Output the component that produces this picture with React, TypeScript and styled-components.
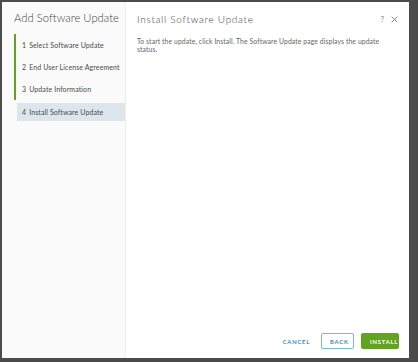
import styled, { createGlobalStyle } from 'styled-components'

const GlobalStyle = createGlobalStyle`
  html, body {
    margin: 0;
    padding: 0;
    background: #4b4b4b;
  }
  body {
    font-family: Lato, "Liberation Sans", sans-serif;
  }
`

type Step = {
  id: number
  title: string
}

const steps: Step[] = [
  { id: 1, title: 'Select Software Update' },
  { id: 2, title: 'End User License Agreement' },
  { id: 3, title: 'Update Information' },
  { id: 4, title: 'Install Software Update' },
]

const App = () => {
  const current = 4

  return (
    <>
      <GlobalStyle />
      <Screen>
        <Dialog>
          <Sidebar>
            <SideTitle>Add Software Update</SideTitle>
            <StepList>
              {steps.map((s) => (
                <StepItem key={s.id} $done={s.id < current} $active={s.id === current}>
                  <span>{s.id}</span>
                  {s.title}
                </StepItem>
              ))}
            </StepList>
          </Sidebar>

          <Content>
            <Header>
              <Title>Install Software Update</Title>
              <HeaderIcons>
                <IconButton>?</IconButton>
                <IconButton>
                  <svg width="7" height="7" viewBox="0 0 10 10">
                    <path d="M1 1 L9 9 M9 1 L1 9" stroke="#777" strokeWidth="1.3" />
                  </svg>
                </IconButton>
              </HeaderIcons>
            </Header>

            <Body>
              To start the update, click Install. The Software Update page displays the update status.
            </Body>

            <Footer>
              <FlatButton>CANCEL</FlatButton>
              <OutlineButton>BACK</OutlineButton>
              <PrimaryButton>INSTALL</PrimaryButton>
            </Footer>
          </Content>
        </Dialog>
      </Screen>
    </>
  )
}

const Screen = styled.div`
  width: 418px;
  height: 362px;
  padding: 2px 9px 4px 2px;
  box-sizing: border-box;
`

const Dialog = styled.div`
  display: flex;
  height: 100%;
  background: #fff;
`

const Sidebar = styled.div`
  width: 124px;
  flex-shrink: 0;
  background: #fafafa;
  border-right: 1px solid #eeeeee;
  padding: 8px 0 0 12px;
  box-sizing: border-box;
`

const SideTitle = styled.h2`
  margin: 0 0 8px 0;
  font-size: 11.2px;
  line-height: 16px;
  font-weight: 300;
  color: #3f3f3f;
  white-space: nowrap;
  letter-spacing: 0.05px;
`

const StepList = styled.ul`
  list-style: none;
  margin: 0;
  padding: 0;
  display: flex;
  flex-direction: column;
`

const StepItem = styled.li<{ $done: boolean; $active: boolean }>`
  display: flex;
  align-items: center;
  gap: 3px;
  margin-left: ${(p) => (p.$active ? '3px' : '0')};
  padding-left: ${(p) => (p.$active ? '5px' : '6px')};
  border-left: ${(p) => (p.$done ? '2px solid #62a420' : 'none')};
  background: ${(p) => (p.$active ? '#dde6ed' : 'transparent')};
  font-size: 7px;
  letter-spacing: 0.1px;
  color: #4a4a4a;
  white-space: nowrap;
  height: ${(p) => (p.$active ? '18px' : '22px')};
  margin-top: ${(p) => (p.$active ? '3px' : '0')};
`

const Content = styled.div`
  flex: 1;
  display: flex;
  flex-direction: column;
  padding: 9px 10px 9px 11px;
  box-sizing: border-box;
`

const Header = styled.div`
  display: flex;
  align-items: center;
  justify-content: space-between;
  height: 16px;
`

const Title = styled.h3`
  margin: 0;
  font-size: 10px;
  font-weight: 300;
  letter-spacing: 0.7px;
  color: #444;
`

const HeaderIcons = styled.div`
  display: flex;
  align-items: center;
  gap: 7px;
  margin-right: 1px;
`

const IconButton = styled.span`
  display: flex;
  align-items: center;
  font-size: 8px;
  color: #888;
`

const Body = styled.p`
  margin: 10px 0 0 0;
  font-size: 6.8px;
  line-height: 8px;
  letter-spacing: 0.1px;
  color: #666;
  max-width: 252px;
  flex: 1;
`

const Footer = styled.div`
  display: flex;
  justify-content: flex-end;
  align-items: center;
  gap: 7px;
`

const ButtonBase = styled.button`
  height: 16px;
  font-family: inherit;
  font-size: 5.8px;
  font-weight: 700;
  letter-spacing: 0.8px;
  border-radius: 2px;
  padding: 0 8px;
  cursor: pointer;
`

const FlatButton = styled(ButtonBase)`
  background: transparent;
  border: none;
  color: #3a89c9;
  padding: 0 2px;
  margin-right: 2px;
`

const OutlineButton = styled(ButtonBase)`
  background: #fff;
  border: 1px solid #7ab6e0;
  color: #3a89c9;
  width: 33px;
`

const PrimaryButton = styled(ButtonBase)`
  background: #62a420;
  border: 1px solid #62a420;
  color: #fff;
  width: 38px;
`

export default App
